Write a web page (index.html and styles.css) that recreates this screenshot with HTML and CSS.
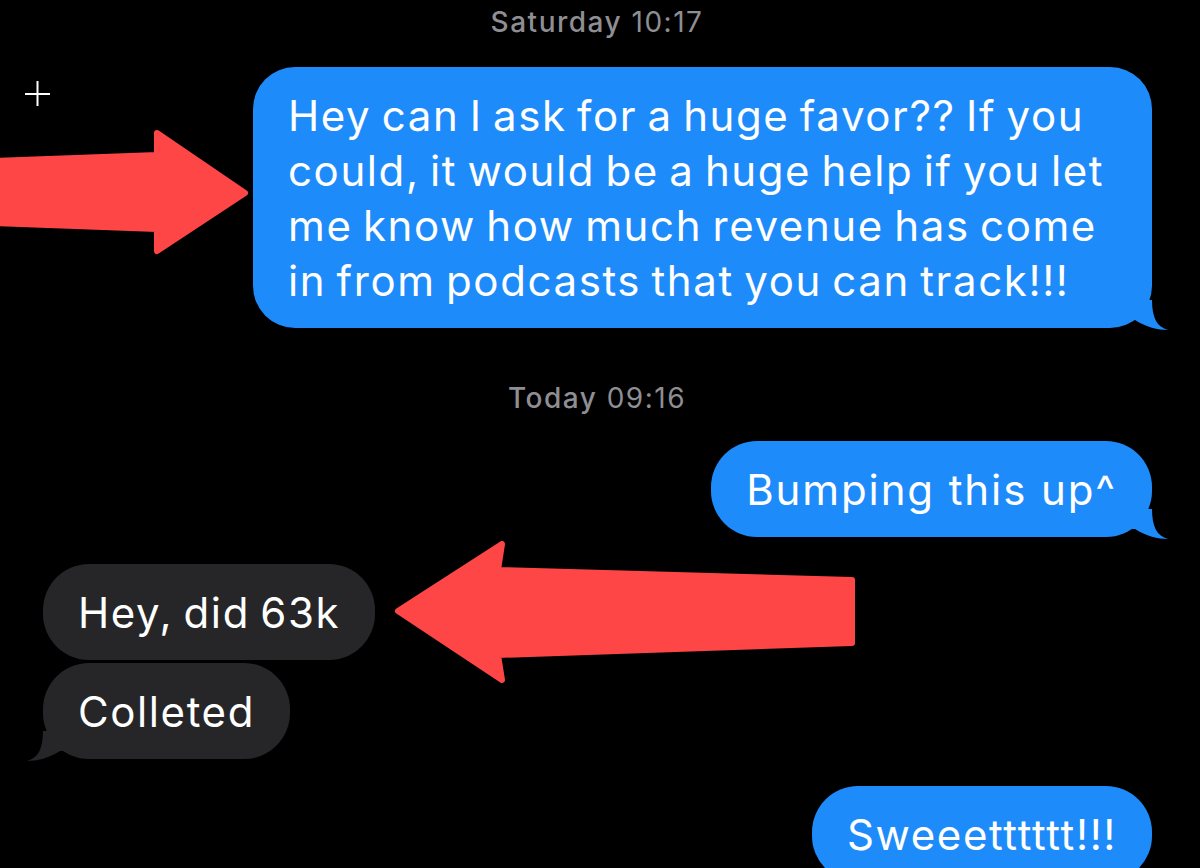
FILE: index.html
```html
<!DOCTYPE html>
<html lang="en">
<head>
  <meta charset="UTF-8" />
  <meta name="viewport" content="width=device-width, initial-scale=1.0"/>
  <title>Messages</title>
  <link rel="stylesheet" href="styles.css">
</head>
<body>

  <div class="chat">
    <div class="stamp"><b>Saturday</b> 10:17</div>

    <div class="row sent">
      <div class="bubble blue long">
        Hey can I ask for a huge favor?? If you could, it would be a huge help if you let me know how much revenue has come in from podcasts that you can track!!!
        <svg class="tail" viewBox="0 0 46 42"><path d="M0 12 L30 12 C30 30 35 39 46 42 C36 42 24 39 13 32 L0 32 Z"/></svg>
      </div>
    </div>

    <div class="stamp second"><b>Today</b> 09:16</div>

    <div class="row sent">
      <div class="bubble blue short">
        Bumping this up^
        <svg class="tail" viewBox="0 0 46 42"><path d="M0 12 L30 12 C30 30 35 39 46 42 C36 42 24 39 13 32 L0 32 Z"/></svg>
      </div>
    </div>

    <div class="row received first">
      <div class="bubble gray">Hey, did 63k</div>
    </div>
    <div class="row received">
      <div class="bubble gray">
        Colleted
        <svg class="tail" viewBox="0 0 46 42"><path d="M0 12 L30 12 C30 30 35 39 46 42 C36 42 24 39 13 32 L0 32 Z"/></svg>
      </div>
    </div>

    <div class="row sent last">
      <div class="bubble blue">Sweeetttttt!!!</div>
    </div>

    <!-- пометки поверх скриншота -->
    <svg class="marks" width="1200" height="868" viewBox="0 0 1200 868">
      <g class="plus">
        <line x1="25" y1="94" x2="50" y2="94"/>
        <line x1="37.5" y1="81" x2="37.5" y2="106"/>
      </g>
      <polygon class="arrow" points="-10,161 157,155 157,133 245,193 157,251 157,229 -10,223"/>
      <polygon class="arrow" points="398,611 502,544 498,570 852,580 852,643 498,655 502,680"/>
    </svg>
  </div>

</body>
</html>
```

FILE: styles.css
```css
/* Тёмный фон как в iMessage */
body {
  margin: 0;
  padding: 0;
  background-color: #000;
  color: #fff;
  font-family: Inter, 'Noto Sans', sans-serif;
  overflow: hidden;
}

.chat {
  position: relative;
  width: 1200px;
  height: 868px;
  overflow: hidden;
}

/* Время над сообщениями */
.stamp {
  text-align: center;
  color: #8e8e93;
  font-size: 28px;
  line-height: 44px;
  height: 44px;
  letter-spacing: 1.5px;
  padding-right: 6px;
}

.stamp b {
  font-weight: 500;
}

.stamp.second {
  margin-top: 48px;
}

.row {
  display: flex;
  padding: 0 48px 0 43px;
}

.row.sent {
  justify-content: flex-end;
  margin-top: 23px;
}

.stamp.second + .row.sent {
  margin-top: 21px;
}

.row.received {
  justify-content: flex-start;
  margin-top: 3px;
}

.row.received.first {
  margin-top: 27px;
}

.row.sent.last {
  margin-top: 27px;
}

.bubble {
  position: relative;
  font-size: 42px;
  line-height: 55px;
  padding: 21px 35px 20px 35px;
  border-radius: 46px;
  letter-spacing: 1.6px;
  word-spacing: -3px;
}

.bubble.long {
  width: 840px;
  padding-right: 24px;
  border-radius: 42px;
}

.bubble.short {
  word-spacing: 0;
  letter-spacing: 1.9px;
}

.bubble.blue {
  background-color: #1e8bfa;
}

.bubble.gray {
  background-color: #262628;
}

/* Хвостик пузыря */
.bubble .tail {
  position: absolute;
  width: 46px;
  height: 42px;
  bottom: -2px;
}

.bubble.blue .tail {
  right: -16px;
  fill: #1e8bfa;
}

.bubble.gray .tail {
  left: -16px;
  fill: #262628;
  transform: scaleX(-1);
}

.marks {
  position: absolute;
  top: 0;
  left: 0;
  pointer-events: none;
}

.marks .plus line {
  stroke: #fff;
  stroke-width: 2;
}

.marks .arrow {
  fill: #fe4646;
  stroke: #fe4646;
  stroke-width: 6;
  stroke-linejoin: round;
}
```
